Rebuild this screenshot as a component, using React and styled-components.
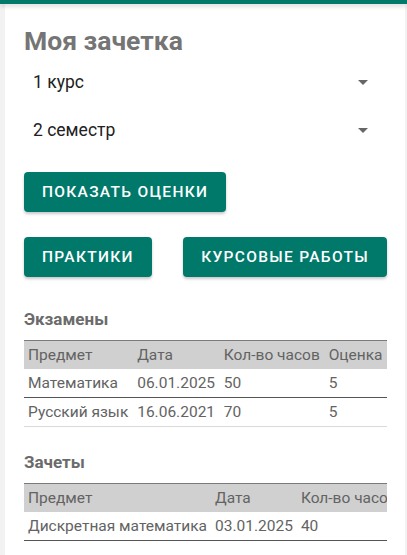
import React from 'react';
import styled, { createGlobalStyle } from 'styled-components';

const GlobalStyle = createGlobalStyle`
  html, body {
    margin: 0;
    padding: 0;
    background: #f2f2f2;
    font-family: Roboto, "Noto Sans", "Liberation Sans", sans-serif;
  }
`;

const TopBar = styled.div`
  height: 4px;
  background: #00796b;
  box-shadow: 0 2px 5px rgba(0, 0, 0, 0.18);
  position: relative;
  z-index: 1;
`;

const Page = styled.div`
  margin: 0 2px 0 5px;
  background: #fff;
  min-height: 551px;
  padding: 20px 18px 0 19px;
  box-sizing: border-box;
`;

const Title = styled.h1`
  margin: 0;
  font-size: 26.5px;
  font-weight: 700;
  color: #757575;
  line-height: 34px;
`;

const Select = styled.div`
  display: flex;
  align-items: center;
  justify-content: space-between;
  height: 48px;
  padding: 0 19px 0 9px;
  font-size: 17.5px;
  color: #212121;
`;

const Arrow = styled.span`
  width: 0;
  height: 0;
  border-left: 5px solid transparent;
  border-right: 5px solid transparent;
  border-top: 5px solid #666;
`;

const Button = styled.button`
  background: #00796b;
  color: #fff;
  border: none;
  border-radius: 4px;
  height: 40px;
  padding: 0 ${p => p.$pad || 18}px;
  font-family: inherit;
  font-size: 15.5px;
  font-weight: 500;
  letter-spacing: 1.3px;
  text-transform: uppercase;
  box-shadow: 0 2px 3px rgba(0, 0, 0, 0.22);
`;

const ButtonRow = styled.div`
  display: flex;
  justify-content: space-between;
  margin-top: ${p => p.$top}px;
`;

const Section = styled.h2`
  margin: 0;
  font-size: 17px;
  font-weight: 700;
  color: #6b6b6b;
  line-height: 22px;
  margin-top: ${p => p.$top}px;
`;

const TableWrap = styled.div`
  overflow: hidden;
  margin-top: 10px;
`;

const Table = styled.table`
  border-collapse: collapse;
  width: 100%;
  font-size: 15.5px;
  color: #636363;
  white-space: nowrap;
`;

const HeadRow = styled.tr`
  background: #d0d0d0;
  border-top: 1.5px solid #7a7a7a;
`;

const Row = styled.tr`
  border-bottom: 1.5px solid ${p => (p.$light ? '#dadada' : '#555')};
`;

const Cell = styled.td`
  height: 28px;
  padding: 0 4px;
  text-align: left;
  font-weight: 400;
`;

const exams = [
  ['Математика', '06.01.2025', '50', '5'],
  ['Русский язык', '16.06.2021', '70', '5'],
];

const credits = [['Дискретная математика', '03.01.2025', '40']];

export default function App() {
  return (
    <>
      <GlobalStyle />
      <TopBar />
      <Page>
        <Title>Моя зачетка</Title>
        <Select>
          <span>1 курс</span>
          <Arrow />
        </Select>
        <Select>
          <span>2 семестр</span>
          <Arrow />
        </Select>
        <ButtonRow $top={18}>
          <Button $pad={18}>Показать оценки</Button>
        </ButtonRow>
        <ButtonRow $top={25}>
          <Button $pad={18}>Практики</Button>
          <Button $pad={18}>Курсовые работы</Button>
        </ButtonRow>

        <Section $top={31}>Экзамены</Section>
        <TableWrap>
          <Table>
            <thead>
              <HeadRow>
                <Cell as="th">Предмет</Cell>
                <Cell as="th">Дата</Cell>
                <Cell as="th">Кол-во часов</Cell>
                <Cell as="th">Оценка</Cell>
              </HeadRow>
            </thead>
            <tbody>
              {exams.map((r, i) => (
                <Row key={i} $light={i === exams.length - 1}>
                  {r.map((c, j) => (
                    <Cell key={j}>{c}</Cell>
                  ))}
                </Row>
              ))}
            </tbody>
          </Table>
        </TableWrap>

        <Section $top={24}>Зачеты</Section>
        <TableWrap>
          <Table>
            <thead>
              <HeadRow>
                <Cell as="th">Предмет</Cell>
                <Cell as="th">Дата</Cell>
                <Cell as="th">Кол-во часов</Cell>
                <Cell as="th">Оценка</Cell>
              </HeadRow>
            </thead>
            <tbody>
              {credits.map((r, i) => (
                <Row key={i}>
                  {r.map((c, j) => (
                    <Cell key={j}>{c}</Cell>
                  ))}
                  <Cell />
                </Row>
              ))}
            </tbody>
          </Table>
        </TableWrap>
      </Page>
    </>
  );
}
